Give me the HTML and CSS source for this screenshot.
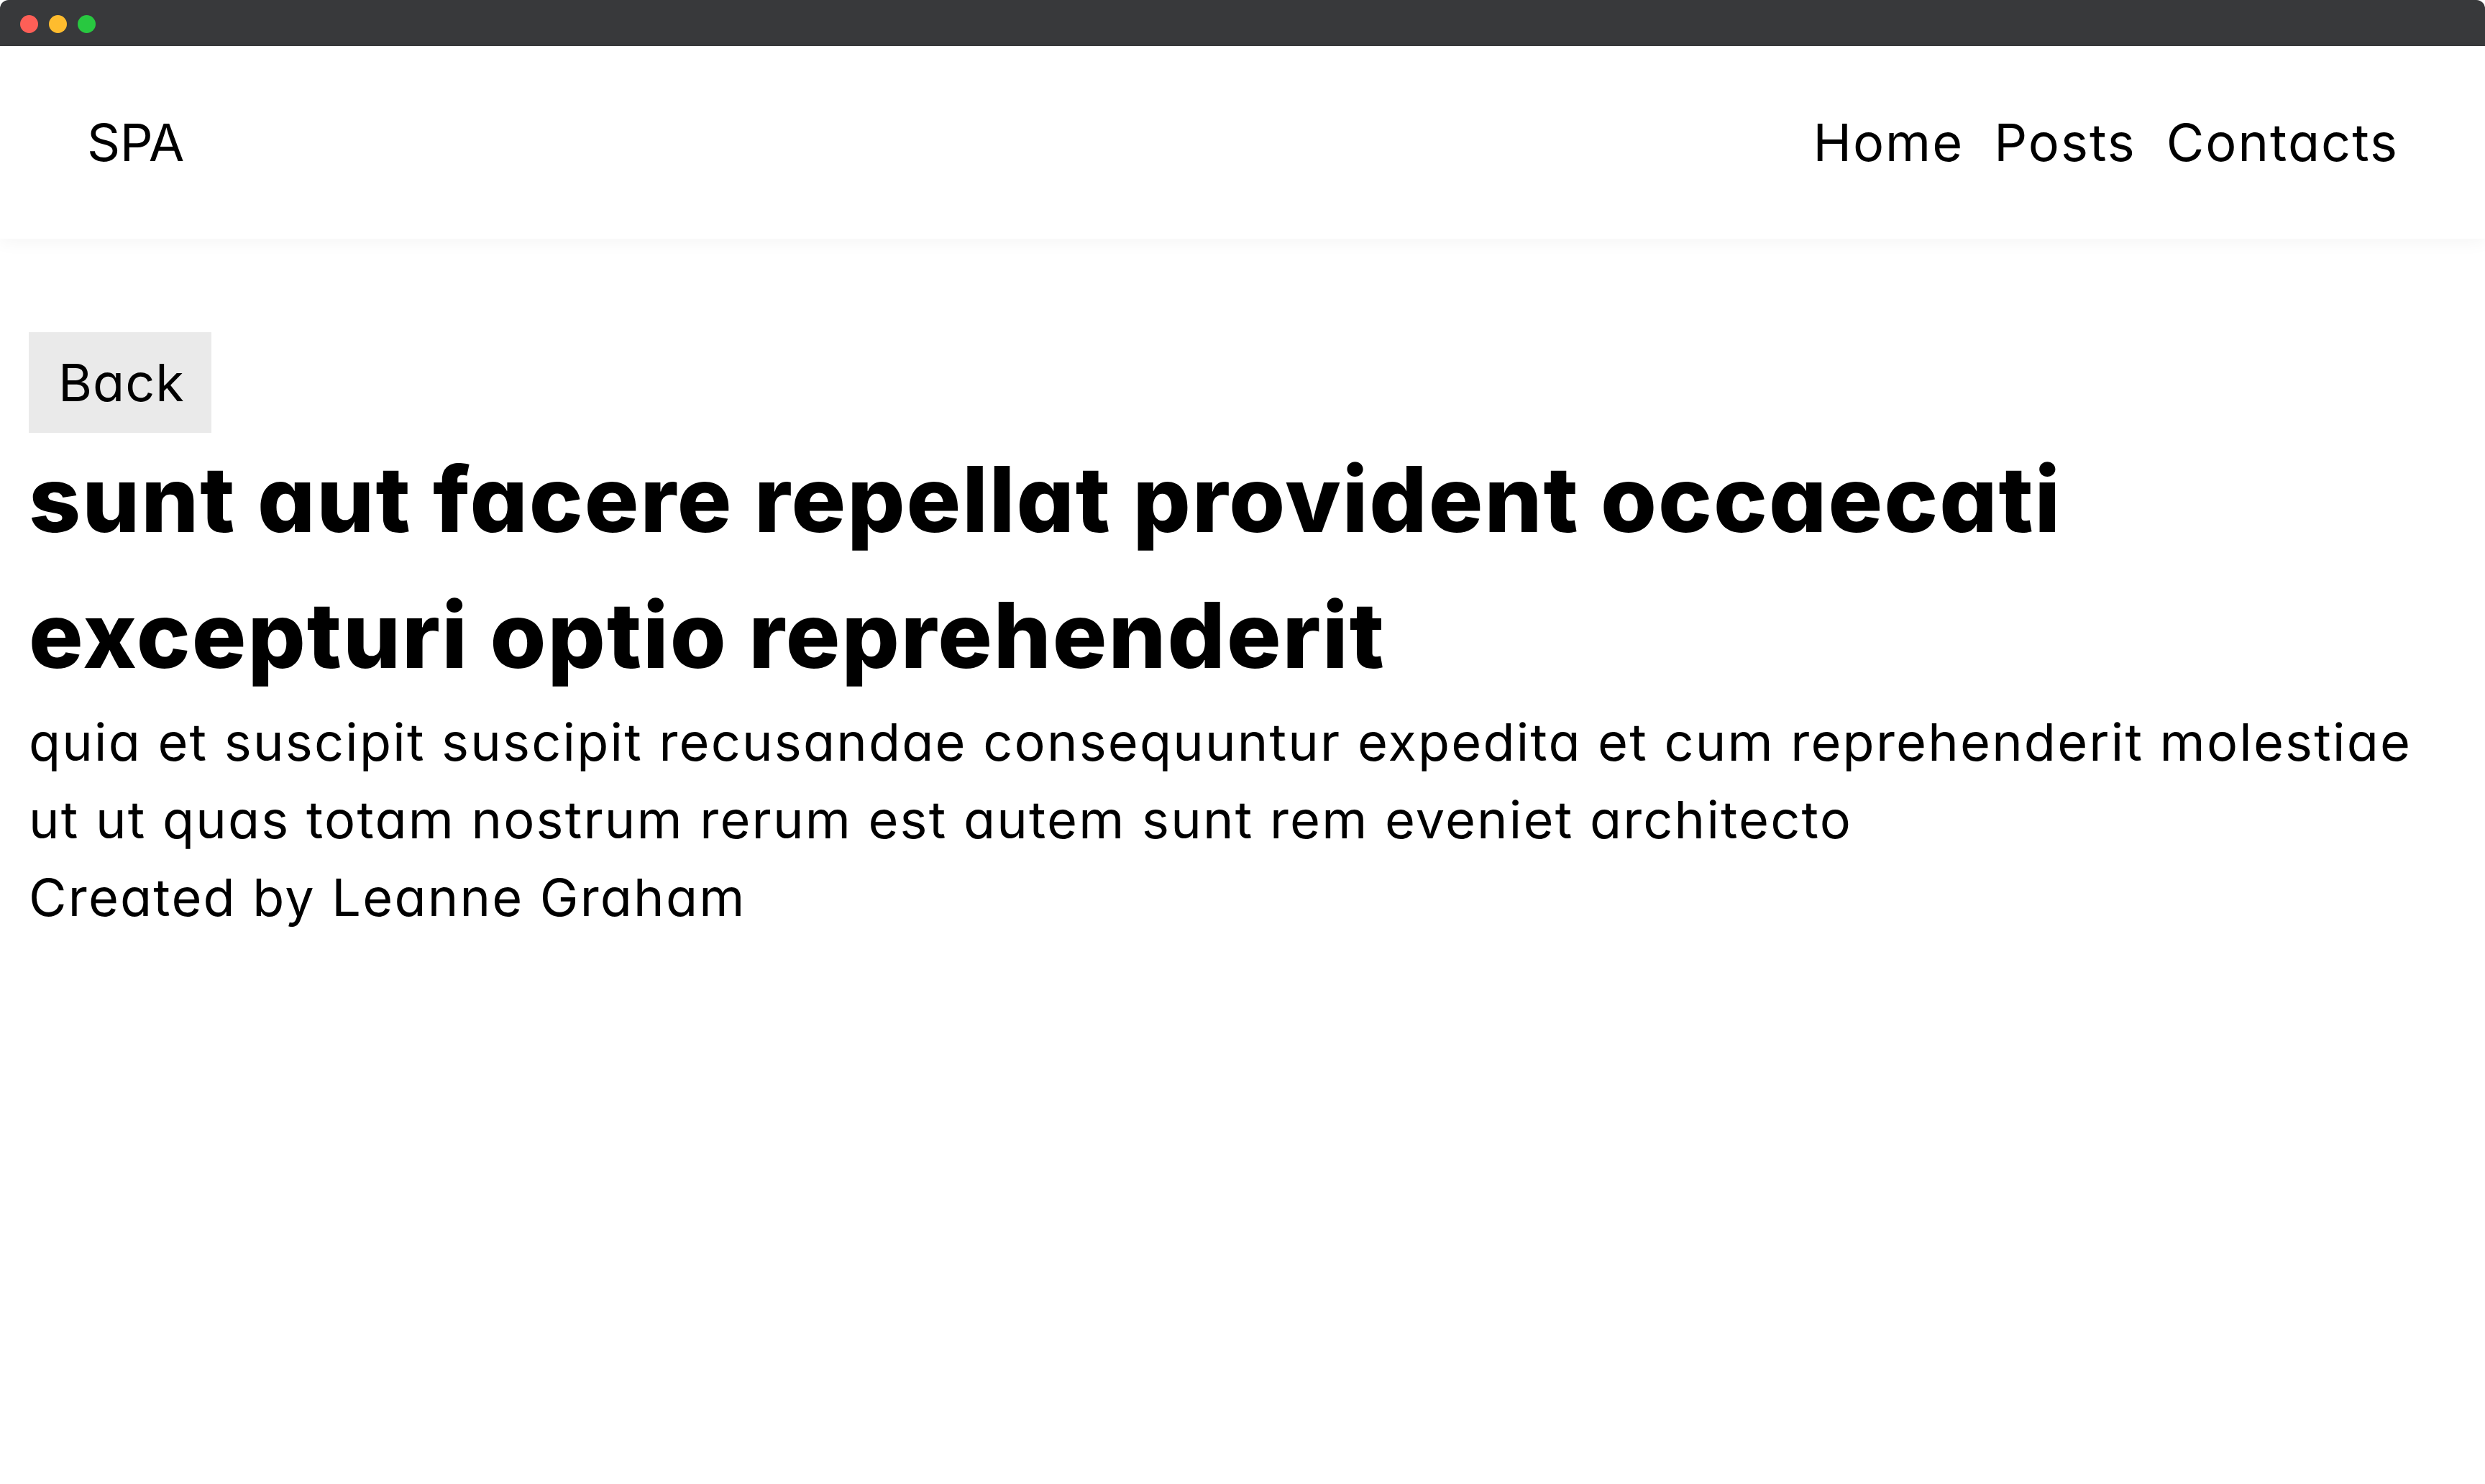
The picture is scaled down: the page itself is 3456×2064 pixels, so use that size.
FILE: index.html
```html
<!DOCTYPE html>
<html lang="en">
<head>
<meta charset="utf-8">
<title>SPA</title>
<link rel="stylesheet" href="styles.css">
</head>
<body>
<div class="window">
  <div class="titlebar">
    <span class="light red"></span>
    <span class="light yellow"></span>
    <span class="light green"></span>
  </div>
  <header class="header">
    <div class="logo">SPA</div>
    <nav class="nav">
      <a class="nav-link" href="#">Home</a>
      <a class="nav-link" href="#">Posts</a>
      <a class="nav-link" href="#">Contacts</a>
    </nav>
  </header>
  <main class="content">
    <button class="back">Back</button>
    <h1 class="title">sunt aut facere repellat provident occaecati excepturi optio reprehenderit</h1>
    <p class="text">quia et suscipit suscipit recusandae consequuntur expedita et cum reprehenderit molestiae ut ut quas totam nostrum rerum est autem sunt rem eveniet architecto</p>
    <p class="text">Created by Leanne Graham</p>
  </main>
</div>
</body>
</html>
```
FILE: styles.css
```css
* { box-sizing: border-box; }
html, body { margin: 0; padding: 0; background: #ffffff; }
body {
  font-family: Inter, "Noto Sans", sans-serif;
  font-feature-settings: "cv11";
  color: #000;
  width: 3456px;
  min-height: 2064px;
}
.window { min-height: 2064px; }
.titlebar {
  height: 64px;
  background: #38393b;
  border-radius: 12px 12px 0 0;
  display: flex;
  align-items: center;
  gap: 15px;
  padding: 2px 0 0 28px;
}
.light { width: 25px; height: 25px; border-radius: 50%; display: block; }
.red { background: #fe5f57; }
.yellow { background: #febc2e; }
.green { background: #28c840; }
.header {
  height: 268px;
  display: flex;
  align-items: center;
  justify-content: space-between;
  padding: 0 120px 0 121px;
  background: #fff;
  box-shadow: 0 8px 20px rgba(0, 0, 0, 0.035);
  position: relative;
}
.logo, .nav-link {
  font-size: 72px;
  line-height: 108px;
  font-weight: 400;
  letter-spacing: 2px;
}
.logo { letter-spacing: -0.5px; }
.nav { display: flex; gap: 42px; }
.nav-link { color: #000; text-decoration: none; }
.content { padding: 130px 40px 0; }
.back {
  font-family: inherit;
  font-feature-settings: "cv11";
  font-size: 72px;
  line-height: 108px;
  letter-spacing: 1px;
  padding: 16px 37px 16px 41px;
  border: none;
  background: #eaeaea;
  color: #000;
  margin: 0;
  display: block;
}
.title {
  font-size: 126px;
  line-height: 189px;
  font-weight: 800;
  letter-spacing: 2px;
  margin: -2px 0 0;
}
.text {
  font-size: 72px;
  line-height: 108px;
  letter-spacing: 2.2px;
  margin: 0;
}
```
